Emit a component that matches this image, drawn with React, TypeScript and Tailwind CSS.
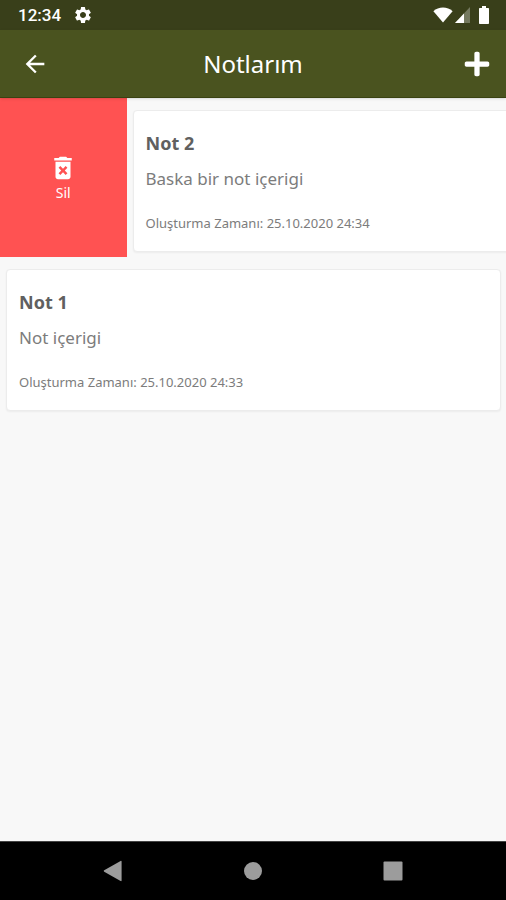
import React from 'react';
import { FaPlus } from 'react-icons/fa';
import { MdArrowBack, MdDeleteForever, MdSettings } from 'react-icons/md';

interface Note {
    id: number;
    title: string;
    content: string;
    createdAt: string;
    swiped: boolean;
}

const notes: Note[] = [
    { id: 2, title: 'Not 2', content: 'Baska bir not içerigi', createdAt: '25.10.2020 24:34', swiped: true },
    { id: 1, title: 'Not 1', content: 'Not içerigi', createdAt: '25.10.2020 24:33', swiped: false },
];

const StatusBar: React.FC = () => (
    <div className="flex h-[30px] items-center justify-between bg-[#393f1a] pr-4 pl-[18px] text-white">
        <div className="flex items-center gap-3">
            <span className="font-['Roboto',sans-serif] text-[17px] leading-none font-medium">12:34</span>
            <MdSettings size={20} />
        </div>
        <div className="flex items-center gap-0.5">
            <svg width="20" height="16" viewBox="0 0 20 16" fill="currentColor">
                <path d="M10 15.5 .4 4.200C3 1.800 6.400.6 10 .6s7 1.200 9.600 3.600z" />
            </svg>
            <svg width="15" height="16" viewBox="0 0 15 16" fill="currentColor">
                <path d="M15 0v16H0z" opacity=".3" />
                <path d="M9 6.400V16H0z" />
            </svg>
            <svg className="ml-1.5" width="12" height="18" viewBox="0 0 12 18" fill="currentColor">
                <path d="M4 0h4v2h2c.7 0 1 .4 1 1v14c0 .6-.4 1-1 1H2c-.6 0-1-.4-1-1V3c0-.6.4-1 1-1h2z" />
            </svg>
        </div>
    </div>
);

const Header: React.FC = () => (
    <header className="z-10 grid h-[68px] grid-cols-[1fr_auto_1fr] items-center border-b border-[#394211] bg-[#4a531f] px-[15px] text-white shadow-sm">
        <button type="button" aria-label="Geri" className="ml-1.5 justify-self-start">
            <MdArrowBack size={28} />
        </button>
        <h1 className="text-2xl">Notlarım</h1>
        <button type="button" aria-label="Not ekle" className="justify-self-end">
            <FaPlus size={28} />
        </button>
    </header>
);

const NoteRow: React.FC<{ note: Note }> = ({ note }) => (
    <li className="flex overflow-hidden">
        {note.swiped && (
            <button
                type="button"
                className="flex w-1/4 shrink-0 flex-col items-center justify-center bg-[#ff5252] text-sm text-white"
            >
                <MdDeleteForever size={30} />
                Sil
            </button>
        )}
        {/* the card keeps its full width and slides out of view when swiped */}
        <div className="w-full shrink-0 pt-3 pr-[5px] pb-[5px] pl-[6px]">
            <article className="rounded border border-[#ececec] bg-white px-3 pt-5 pb-[18px] text-[#7c7c7c] shadow-xs">
                <h2 className="text-lg leading-6 font-bold text-[#606060]">{note.title}</h2>
                <p className="mt-3 text-[17px] leading-6">{note.content}</p>
                <p className="mt-[22px] text-[13px] leading-5">Oluşturma Zamanı: {note.createdAt}</p>
            </article>
        </div>
    </li>
);

const NavigationBar: React.FC = () => (
    <nav className="flex h-[59px] items-center justify-center gap-28 border-t border-[#444444] bg-black text-[#9c9c9c]">
        <button type="button" aria-label="Geri">
            <svg width="28" height="28" viewBox="0 0 28 28" fill="currentColor">
                <path d="M22.600 4.500v19c0 .6-.5.8-1 .5L5.200 14.700c-.6-.4-.6-1 0-1.400L21.600 4c.5-.3 1-.1 1 .5z" />
            </svg>
        </button>
        <button type="button" aria-label="Ana ekran">
            <svg width="28" height="28" viewBox="0 0 28 28" fill="currentColor">
                <circle cx="14" cy="14" r="9" />
            </svg>
        </button>
        <button type="button" aria-label="Son uygulamalar">
            <svg width="28" height="28" viewBox="0 0 28 28" fill="currentColor">
                <rect x="4.500" y="4.500" width="19" height="19" rx="1" />
            </svg>
        </button>
    </nav>
);

export default function App() {
    return (
        <div className="flex min-h-screen flex-col bg-[#f8f8f8] font-['Noto_Sans','Open_Sans',sans-serif]">
            <StatusBar />
            <Header />
            <main className="flex-1">
                <ul>
                    {notes.map((note) => (
                        <NoteRow key={note.id} note={note} />
                    ))}
                </ul>
            </main>
            <NavigationBar />
        </div>
    );
}
